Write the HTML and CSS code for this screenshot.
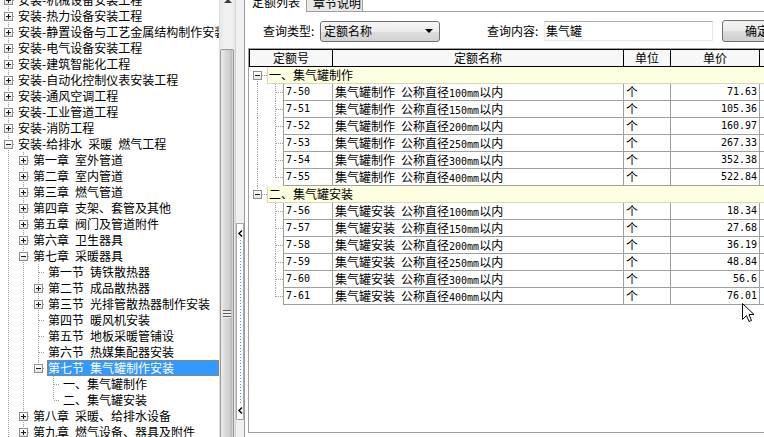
FILE: index.html
```html
<!DOCTYPE html>
<html lang="zh-CN">
<head>
<meta charset="utf-8">
<title>定额查询</title>
<link rel="stylesheet" href="styles.css">
</head>
<body>
<div class="tree">
  <div class="tree-inner">
    <div class="tr"><span class="tg m"><i class="bx p"></i></span><span class="tx">安装-机械设备安装工程</span></div>
    <div class="tr"><span class="tg m"><i class="bx p"></i></span><span class="tx">安装-热力设备安装工程</span></div>
    <div class="tr"><span class="tg m"><i class="bx p"></i></span><span class="tx">安装-静置设备与工艺金属结构制作安装工程</span></div>
    <div class="tr"><span class="tg m"><i class="bx p"></i></span><span class="tx">安装-电气设备安装工程</span></div>
    <div class="tr"><span class="tg m"><i class="bx p"></i></span><span class="tx">安装-建筑智能化工程</span></div>
    <div class="tr"><span class="tg m"><i class="bx p"></i></span><span class="tx">安装-自动化控制仪表安装工程</span></div>
    <div class="tr"><span class="tg m"><i class="bx p"></i></span><span class="tx">安装-通风空调工程</span></div>
    <div class="tr"><span class="tg m"><i class="bx p"></i></span><span class="tx">安装-工业管道工程</span></div>
    <div class="tr"><span class="tg m"><i class="bx p"></i></span><span class="tx">安装-消防工程</span></div>
    <div class="tr"><span class="tg m"><i class="bx n"></i></span><span class="tx">安装-给排水&ensp;采暖&ensp;燃气工程</span></div>
    <div class="tr"><span class="ln v"></span><span class="tg m"><i class="bx p"></i></span><span class="tx">第一章&ensp;室外管道</span></div>
    <div class="tr"><span class="ln v"></span><span class="tg m"><i class="bx p"></i></span><span class="tx">第二章&ensp;室内管道</span></div>
    <div class="tr"><span class="ln v"></span><span class="tg m"><i class="bx p"></i></span><span class="tx">第三章&ensp;燃气管道</span></div>
    <div class="tr"><span class="ln v"></span><span class="tg m"><i class="bx p"></i></span><span class="tx">第四章&ensp;支架、套管及其他</span></div>
    <div class="tr"><span class="ln v"></span><span class="tg m"><i class="bx p"></i></span><span class="tx">第五章&ensp;阀门及管道附件</span></div>
    <div class="tr"><span class="ln v"></span><span class="tg m"><i class="bx p"></i></span><span class="tx">第六章&ensp;卫生器具</span></div>
    <div class="tr"><span class="ln v"></span><span class="tg m"><i class="bx n"></i></span><span class="tx">第七章&ensp;采暖器具</span></div>
    <div class="tr"><span class="ln v"></span><span class="ln v"></span><span class="tg m lf"></span><span class="tx">第一节&ensp;铸铁散热器</span></div>
    <div class="tr"><span class="ln v"></span><span class="ln v"></span><span class="tg m"><i class="bx p"></i></span><span class="tx">第二节&ensp;成品散热器</span></div>
    <div class="tr"><span class="ln v"></span><span class="ln v"></span><span class="tg m"><i class="bx p"></i></span><span class="tx">第三节&ensp;光排管散热器制作安装</span></div>
    <div class="tr"><span class="ln v"></span><span class="ln v"></span><span class="tg m lf"></span><span class="tx">第四节&ensp;暖风机安装</span></div>
    <div class="tr"><span class="ln v"></span><span class="ln v"></span><span class="tg m lf"></span><span class="tx">第五节&ensp;地板采暖管铺设</span></div>
    <div class="tr"><span class="ln v"></span><span class="ln v"></span><span class="tg m lf"></span><span class="tx">第六节&ensp;热媒集配器安装</span></div>
    <div class="tr"><span class="ln v"></span><span class="ln v"></span><span class="tg e"><i class="bx n"></i></span><span class="tx sel">第七节&ensp;集气罐制作安装</span></div>
    <div class="tr"><span class="ln v"></span><span class="ln v"></span><span class="ln"></span><span class="tg m lf"></span><span class="tx">一、集气罐制作</span></div>
    <div class="tr"><span class="ln v"></span><span class="ln v"></span><span class="ln"></span><span class="tg e lf"></span><span class="tx">二、集气罐安装</span></div>
    <div class="tr"><span class="ln v"></span><span class="tg m"><i class="bx p"></i></span><span class="tx">第八章&ensp;采暖、给排水设备</span></div>
    <div class="tr"><span class="ln v"></span><span class="tg m"><i class="bx p"></i></span><span class="tx">第九章&ensp;燃气设备、器具及附件</span></div>
  </div>
</div>

<div class="sb">
  <div class="sb-up"><span class="sb-arrow"></span></div>
  <div class="sb-track"></div>
  <div class="sb-thumb"><span class="grip"></span></div>
</div>

<div class="sp">
  <div class="sp-box">
    <svg class="chev" width="5" height="7" viewBox="0 0 5 7"><polyline points="4,0.5 1,3.5 4,6.5" fill="none" stroke="#000" stroke-width="1.4"/></svg>
    <span class="sp-dots"></span>
    <svg class="chev" width="5" height="7" viewBox="0 0 5 7"><polyline points="4,0.5 1,3.5 4,6.5" fill="none" stroke="#000" stroke-width="1.4"/></svg>
  </div>
</div>

<div class="rp">
  <div class="tabs">
    <div class="tab on">定额列表</div>
    <div class="tab off">章节说明</div>
    <div class="tab-fill"></div>
  </div>

  <div class="query">
    <span class="lbl">查询类型:</span>
    <div class="combo"><span>定额名称</span><span class="dd"></span></div>
    <span class="lbl lbl2">查询内容:</span>
    <div class="inp">集气罐</div>
    <div class="btn">确定</div>
  </div>

  <div class="grid">
    <div class="gh">
      <div class="h first">定额号</div>
      <div class="h">定额名称</div>
      <div class="h">单位</div>
      <div class="h">单价</div>
      <div class="h last"></div>
    </div>

    <div class="grp"><span class="gt g-first"><i class="bx n"></i></span><span class="gy">一、集气罐制作</span></div>
    <div class="dr"><span class="dt vv"></span><span class="c id">7-50</span><span class="c">集气罐制作&ensp;公称直径<span class="a">100mm</span>以内</span><span class="c">个</span><span class="c pr">71.63</span><span class="c x"></span></div>
    <div class="dr"><span class="dt vv"></span><span class="c id">7-51</span><span class="c">集气罐制作&ensp;公称直径<span class="a">150mm</span>以内</span><span class="c">个</span><span class="c pr">105.36</span><span class="c x"></span></div>
    <div class="dr"><span class="dt vv"></span><span class="c id">7-52</span><span class="c">集气罐制作&ensp;公称直径<span class="a">200mm</span>以内</span><span class="c">个</span><span class="c pr">160.97</span><span class="c x"></span></div>
    <div class="dr"><span class="dt vv"></span><span class="c id">7-53</span><span class="c">集气罐制作&ensp;公称直径<span class="a">250mm</span>以内</span><span class="c">个</span><span class="c pr">267.33</span><span class="c x"></span></div>
    <div class="dr"><span class="dt vv"></span><span class="c id">7-54</span><span class="c">集气罐制作&ensp;公称直径<span class="a">300mm</span>以内</span><span class="c">个</span><span class="c pr">352.38</span><span class="c x"></span></div>
    <div class="dr"><span class="dt ve"></span><span class="c id">7-55</span><span class="c">集气罐制作&ensp;公称直径<span class="a">400mm</span>以内</span><span class="c">个</span><span class="c pr">522.84</span><span class="c x"></span></div>

    <div class="grp"><span class="gt g-last"><i class="bx n"></i></span><span class="gy">二、集气罐安装</span></div>
    <div class="dr"><span class="dt v"></span><span class="c id">7-56</span><span class="c">集气罐安装&ensp;公称直径<span class="a">100mm</span>以内</span><span class="c">个</span><span class="c pr">18.34</span><span class="c x"></span></div>
    <div class="dr"><span class="dt v"></span><span class="c id">7-57</span><span class="c">集气罐安装&ensp;公称直径<span class="a">150mm</span>以内</span><span class="c">个</span><span class="c pr">27.68</span><span class="c x"></span></div>
    <div class="dr"><span class="dt v"></span><span class="c id">7-58</span><span class="c">集气罐安装&ensp;公称直径<span class="a">200mm</span>以内</span><span class="c">个</span><span class="c pr">36.19</span><span class="c x"></span></div>
    <div class="dr"><span class="dt v"></span><span class="c id">7-59</span><span class="c">集气罐安装&ensp;公称直径<span class="a">250mm</span>以内</span><span class="c">个</span><span class="c pr">48.84</span><span class="c x"></span></div>
    <div class="dr"><span class="dt v"></span><span class="c id">7-60</span><span class="c">集气罐安装&ensp;公称直径<span class="a">300mm</span>以内</span><span class="c">个</span><span class="c pr">56.6</span><span class="c x"></span></div>
    <div class="dr"><span class="dt e"></span><span class="c id">7-61</span><span class="c">集气罐安装&ensp;公称直径<span class="a">400mm</span>以内</span><span class="c">个</span><span class="c pr">76.01</span><span class="c x"></span></div>
  </div>
</div>

<svg class="cursor" width="13" height="20" viewBox="0 0 13 20"><path d="M0.5,0.5 L0.5,16.5 L4.5,12.5 L7,18.5 L9.5,17.5 L7,11.5 L12,11.5 Z" fill="#fff" stroke="#000" stroke-width="1" stroke-linejoin="miter"/></svg>
</body>
</html>
```
FILE: styles.css
```css
* { box-sizing: border-box; }

body {
  margin: 0;
  width: 764px;
  height: 437px;
  overflow: hidden;
  display: flex;
  position: relative;
  background: #fff;
  color: #000;
  font: 12px/16px "Noto Sans CJK SC", "Noto Sans", sans-serif;
}

/* ---------- tree ---------- */
.tree {
  width: 219px;
  flex: none;
  overflow: hidden;
}
.tree-inner { margin-top: -8px; }
.tr {
  display: flex;
  height: 16px;
  line-height: 16px;
  white-space: nowrap;
}
.ln { width: 15px; flex: none; }
.ln.v {
  background: repeating-linear-gradient(to bottom, #a0a0a0 0 1px, transparent 1px 2px) 8px 0 / 1px 100% no-repeat;
}
.tg {
  width: 15px;
  flex: none;
  display: flex;
  align-items: center;
  padding-left: 4px;
}
.tg.m {
  background:
    repeating-linear-gradient(to bottom, #a0a0a0 0 1px, transparent 1px 2px) 8px 0 / 1px 16px no-repeat,
    repeating-linear-gradient(to right, #a0a0a0 0 1px, transparent 1px 2px) 9px 8px / 6px 1px no-repeat;
}
.tg.e {
  background:
    repeating-linear-gradient(to bottom, #a0a0a0 0 1px, transparent 1px 2px) 8px 0 / 1px 8px no-repeat,
    repeating-linear-gradient(to right, #a0a0a0 0 1px, transparent 1px 2px) 9px 8px / 6px 1px no-repeat;
}
.bx {
  display: block;
  width: 9px;
  height: 9px;
  border: 1px solid #8f8f8f;
  background-color: #fff;
}
.bx.p {
  background:
    linear-gradient(#1a1a1a, #1a1a1a) 1px 3px / 5px 1px no-repeat,
    linear-gradient(#1a1a1a, #1a1a1a) 3px 1px / 1px 5px no-repeat,
    linear-gradient(#fff, #e4e4e4);
}
.bx.n {
  background:
    linear-gradient(#1a1a1a, #1a1a1a) 1px 3px / 5px 1px no-repeat,
    linear-gradient(#fff, #e4e4e4);
}
.tx {
  margin-left: 2px;
  padding-left: 1px;
}
.tx.sel {
  flex: 1;
  background: #3399ff;
  color: #fff;
  outline: 1px dotted #c07a30;
  outline-offset: -1px;
}

/* ---------- scrollbar ---------- */
.sb {
  width: 16px;
  flex: none;
  display: flex;
  flex-direction: column;
  border-left: 1px solid #e2e2e2;
  background: linear-gradient(to right, #e6e6e6, #f1f1f1 30%, #f1f1f1 70%, #e6e6e6);
}
.sb-up {
  height: 10px;
  display: flex;
  justify-content: center;
}
.sb-arrow {
  margin-top: -1px;
  width: 0;
  height: 0;
  border-left: 4px solid transparent;
  border-right: 4px solid transparent;
  border-bottom: 4px solid #3c3c3c;
}
.sb-track { height: 39px; }
.sb-thumb {
  flex: 1;
  margin: 0 1px 0 0;
  border: 1px solid #989898;
  border-bottom: none;
  border-radius: 2px 2px 0 0;
  background: linear-gradient(to right, #ececec, #d8d8d8 40%, #cfcfcf 70%, #b9b9b9 85%, #dcdcdc);
  display: flex;
  justify-content: center;
}
.grip {
  margin-top: 260px;
  width: 8px;
  height: 8px;
  background: repeating-linear-gradient(to bottom, #5f5f5f 0 1px, #eeeeee 1px 3px);
}

/* ---------- splitter ---------- */
.sp {
  width: 9px;
  flex: none;
  background: #f0f0f0;
  border-left: 1px solid #d0d0d0;
  padding-top: 223px;
}
.sp-box {
  height: 197px;
  width: 8px;
  border: 1px solid #a8a8a8;
  background: #fff;
  display: flex;
  flex-direction: column;
  align-items: center;
  padding: 6px 0 5px;
}
.chev { display: block; flex: none; }
.sp-dots {
  flex: 1;
  width: 1px;
  margin: 3px 0;
  background: repeating-linear-gradient(to bottom, #3399ff 0 1px, transparent 1px 3px);
}

/* ---------- right panel ---------- */
.rp {
  flex: 1;
  min-width: 0;
  border-left: 1px solid #9c9c9c;
  display: flex;
  flex-direction: column;
  overflow: hidden;
}
.tabs {
  height: 12px;
  display: flex;
  align-items: flex-end;
  flex: none;
}
.tab {
  height: 22px;
  padding-top: 3px;
  line-height: 18px;
  white-space: nowrap;
  flex: none;
}
.tab.on {
  width: 61px;
  padding-left: 7px;
  background: #fff;
}
.tab.off {
  width: 57px;
  padding-left: 6px;
  background: #e8e8e8;
  border: 1px solid #a0a0a0;
}
.tab-fill {
  flex: 1;
  height: 1px;
  background: #a0a0a0;
}

.query {
  display: flex;
  align-items: center;
  margin-top: 8px;
  height: 22px;
  flex: none;
  white-space: nowrap;
}
.lbl {
  width: 57px;
  margin-left: 18px;
  flex: none;
}
.lbl2 { margin-left: 47px; }
.combo {
  width: 120px;
  height: 21px;
  flex: none;
  display: flex;
  align-items: center;
  justify-content: space-between;
  padding: 0 6px 0 3px;
  border: 1px solid #707070;
  border-radius: 3px;
  background: linear-gradient(#f6f6f6, #ebebeb 50%, #dddddd 51%, #d3d3d3);
}
.dd {
  width: 0;
  height: 0;
  border-left: 4px solid transparent;
  border-right: 4px solid transparent;
  border-top: 4px solid #000;
}
.inp {
  width: 169px;
  height: 20px;
  flex: none;
  padding-left: 1px;
  line-height: 18px;
  border: 1px solid #e3e9ef;
  border-top-color: #abadb3;
  background: #fff;
}
.btn {
  width: 80px;
  height: 22px;
  flex: none;
  margin-left: 9px;
  padding-left: 22px;
  line-height: 20px;
  border: 1px solid #707070;
  border-radius: 3px;
  background: linear-gradient(#f2f2f2, #ebebeb 50%, #dddddd 51%, #cfcfcf);
}

/* ---------- grid ---------- */
.grid {
  width: 560px;
  height: 385px;
  flex: none;
  margin: 6px 0 0 3px;
  border: 1px solid #a0a0a0;
  border-right: none;
  white-space: nowrap;
}
.gh, .dr {
  display: grid;
  grid-template-columns: 34px 50px 291px 47px 89px 1fr;
}
.gh {
  height: 18px;
  border-top: 1px solid #000;
  border-bottom: 1px solid #000;
  background: #f7f7f7;
}
.h {
  border-right: 1px solid #000;
  text-align: center;
  line-height: 16px;
}
.h.first {
  grid-column: span 2;
  border-left: 1px solid #000;
}
.h.last { border-right: none; }

.grp {
  display: grid;
  grid-template-columns: 18px 1fr;
  height: 17px;
}
.gt {
  display: flex;
  align-items: center;
  padding-left: 4px;
}
.gt.g-first {
  background:
    repeating-linear-gradient(to bottom, #a0a0a0 0 1px, transparent 1px 2px) 8px 8px / 1px 9px no-repeat,
    repeating-linear-gradient(to right, #a0a0a0 0 1px, transparent 1px 2px) 13px 8px / 5px 1px no-repeat;
}
.gt.g-last {
  background:
    repeating-linear-gradient(to bottom, #a0a0a0 0 1px, transparent 1px 2px) 8px 0 / 1px 8px no-repeat,
    repeating-linear-gradient(to right, #a0a0a0 0 1px, transparent 1px 2px) 13px 8px / 5px 1px no-repeat;
}
.gy {
  background: #ffffe1;
  border: 1px solid #d8d8b8;
  border-right: none;
  border-top: none;
  padding-left: 1px;
  line-height: 16px;
}

.dr { height: 17px; }
.dt { display: block; }
.dt.vv {
  background:
    repeating-linear-gradient(to bottom, #a0a0a0 0 1px, transparent 1px 2px) 8px 0 / 1px 17px no-repeat,
    repeating-linear-gradient(to bottom, #a0a0a0 0 1px, transparent 1px 2px) 26px 0 / 1px 17px no-repeat,
    repeating-linear-gradient(to right, #a0a0a0 0 1px, transparent 1px 2px) 27px 8px / 7px 1px no-repeat;
}
.dt.ve {
  background:
    repeating-linear-gradient(to bottom, #a0a0a0 0 1px, transparent 1px 2px) 8px 0 / 1px 17px no-repeat,
    repeating-linear-gradient(to bottom, #a0a0a0 0 1px, transparent 1px 2px) 26px 0 / 1px 9px no-repeat,
    repeating-linear-gradient(to right, #a0a0a0 0 1px, transparent 1px 2px) 27px 8px / 7px 1px no-repeat;
}
.dt.v {
  background:
    repeating-linear-gradient(to bottom, #a0a0a0 0 1px, transparent 1px 2px) 26px 0 / 1px 17px no-repeat,
    repeating-linear-gradient(to right, #a0a0a0 0 1px, transparent 1px 2px) 27px 8px / 7px 1px no-repeat;
}
.dt.e {
  background:
    repeating-linear-gradient(to bottom, #a0a0a0 0 1px, transparent 1px 2px) 26px 0 / 1px 9px no-repeat,
    repeating-linear-gradient(to right, #a0a0a0 0 1px, transparent 1px 2px) 27px 8px / 7px 1px no-repeat;
}
.c {
  border-right: 1px solid #a0a0a0;
  border-bottom: 1px solid #a0a0a0;
  padding-left: 2px;
  line-height: 16px;
  overflow: hidden;
}
.c.id { border-left: 1px solid #a0a0a0; padding-left: 2px; }
.c.id, .c.pr, .a {
  font-family: "DejaVu Sans Mono", "Liberation Mono", monospace;
  font-size: 10px;
}
.c.pr { text-align: right; padding: 0 2px 0 0; }
.c.x { border-right: none; }

.cursor {
  position: absolute;
  left: 742px;
  top: 303px;
}
```
